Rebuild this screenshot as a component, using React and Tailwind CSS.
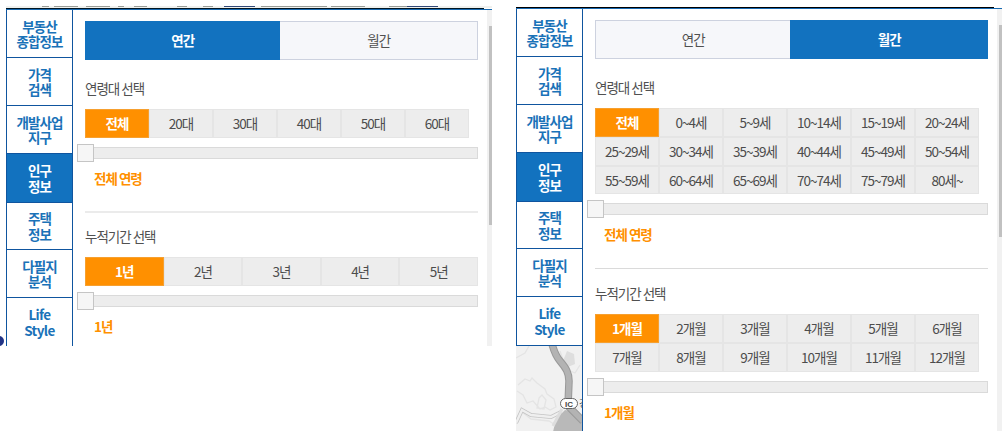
import React, { useState } from 'react';
import clsx from 'clsx';

const menuItems = [
  { lines: ['부동산', '종합정보'], height: 'h-12' },
  { lines: ['가격', '검색'], height: 'h-12' },
  { lines: ['개발사업', '지구'], height: 'h-12' },
  { lines: ['인구', '정보'], height: 'h-[49px]' },
  { lines: ['주택', '정보'], height: 'h-[47px]' },
  { lines: ['다필지', '분석'], height: 'h-12' },
  { lines: ['Life', 'Style'], height: 'h-[49px]' },
];

const periodTabs = ['연간', '월간'];

const yearAges = ['전체', '20대', '30대', '40대', '50대', '60대'];
const monthAges = [
  '전체', '0~4세', '5~9세', '10~14세', '15~19세', '20~24세',
  '25~29세', '30~34세', '35~39세', '40~44세', '45~49세', '50~54세',
  '55~59세', '60~64세', '65~69세', '70~74세', '75~79세', '80세~',
];
const years = ['1년', '2년', '3년', '4년', '5년'];
const months = [
  '1개월', '2개월', '3개월', '4개월', '5개월', '6개월',
  '7개월', '8개월', '9개월', '10개월', '11개월', '12개월',
];

function SideMenu({ children }) {
  const [active, setActive] = useState(3);

  return (
    <nav className="flex w-[67px] shrink-0 flex-col border-r border-[#0f559f]">
      {menuItems.map(({ lines, height }, i) => (
        <button
          key={i}
          onClick={() => setActive(i)}
          className={clsx(
            'flex shrink-0 flex-col items-center justify-center border-b border-l border-[#0f559f] pt-px text-[13.5px] leading-[15.5px] font-bold',
            height,
            i === 6 ? 'tracking-[-0.6px]' : 'tracking-[-0.9px]',
            active === i ? 'bg-[#1272bf] text-white' : 'bg-white text-[#1a72b8]'
          )}
        >
          <span>{lines[0]}</span>
          <span>{lines[1]}</span>
        </button>
      ))}
      {children}
    </nav>
  );
}

function PeriodTabs({ active }) {
  return (
    <div className="grid h-[39px] grid-cols-[195.4px_1fr]">
      {periodTabs.map((tab) => (
        <button
          key={tab}
          className={clsx(
            'border text-[13.5px] tracking-[-0.9px]',
            active === tab
              ? 'border-[#1272bf] bg-[#1272bf] font-bold text-white'
              : 'border-[#cdd2df] bg-[#f6f7fa] text-[#505050]',
            active !== tab && (tab === '연간' ? 'border-r-0' : 'border-l-0')
          )}
        >
          {tab}
        </button>
      ))}
    </div>
  );
}

function OptionGrid({ options, wide }) {
  const [selected, setSelected] = useState(0);

  return (
    <div className={clsx('grid', wide ? 'w-[393px] grid-cols-5' : 'w-[384px] grid-cols-6')}>
      {options.map((option, i) => (
        <button
          key={option}
          onClick={() => setSelected(i)}
          className={clsx(
            'h-[28.8px] border pt-px text-[13.5px] leading-none tracking-[-1px]',
            selected === i
              ? 'border-[#f6a030] bg-[#ff9000] font-bold text-white'
              : 'border-[#e5e5e5] bg-[#ededed] text-[#4c4c4c]'
          )}
        >
          {option}
        </button>
      ))}
    </div>
  );
}

function Slider() {
  return (
    <div className="-ml-2 flex h-[18px] items-center">
      <span className="h-[18px] w-[17px] shrink-0 border border-[#c5c5c5] bg-[#f6f6f6]" />
      <span className="h-3 flex-1 border border-l-0 border-[#dadada] bg-[#ededed]" />
    </div>
  );
}

function FilterGroup({ title, options, value, wide }) {
  return (
    <section>
      <h3 className="h-5 text-[13.5px] leading-5 tracking-[-1px] text-[#505050]">{title}</h3>
      <div className="mt-[11px]">
        <OptionGrid options={options} wide={wide} />
      </div>
      <div className="mt-1.5">
        <Slider />
      </div>
      <p className="mt-1.5 ml-[9px] h-5 text-[13.5px] leading-5 font-bold tracking-[-1px] text-[#ff9000]">{value}</p>
    </section>
  );
}

function ScrollBar({ long }) {
  return (
    <div className="flex w-[5px] shrink-0 flex-col items-end bg-[#f1f1f1] pt-4">
      <span className={clsx('w-[3px] bg-[#c1c1c1]', long ? 'h-[212px]' : 'h-[199px]')} />
    </div>
  );
}

function MapPreview() {
  return (
    <svg viewBox="0 0 66 86" className="h-[86px] w-[66px] shrink-0">
      <rect width="66" height="86" fill="#f1f1f1" />
      <g fill="none" stroke="#e4e4e4" strokeWidth="1.3">
        <path d="M13 0l-4 7-9 5M2 39l7-6 5 2 2-3 5 5 8 6 2 5 7 5 2 8-6 3-5-3-5 2-7-8-6 2-4-8-6-4M23 52l3-3 4 5-2 9-7-1z" />
        <path d="M6 66l9 7 18 2 8 5M44 5l6 18 9 4 5-8" />
      </g>
      <path d="M51 5l7 3 1 10-7 3-5-6z" fill="#dedede" />
      <path d="M0 77l6-13 9 5 20 2 10-5" fill="none" stroke="#c4c4c4" strokeWidth="4" />
      <path d="M0 77l6-13 9 5 20 2 10-5" fill="none" stroke="#efefef" strokeWidth="2.4" />
      <path d="M37 86l3-13 9-9 5 1 5 6 7 3v12z" fill="#b9b9b9" />
      <path d="M46 63l-9 17" fill="none" stroke="#ddd" strokeWidth="3" />
      <path d="M36-2c2 7 3 11 8 17 6 7 9 12 9 20l-1 25 15 15" fill="none" stroke="#999" strokeWidth="7.5" />
      <path d="M36-2c2 7 3 11 8 17 6 7 9 12 9 20l-1 25 15 15" fill="none" stroke="#b3b3b3" strokeWidth="5.5" />
      <rect x="44.5" y="52.5" width="17" height="10" rx="5" fill="#fff" stroke="#666" />
      <text x="53" y="60.5" textAnchor="middle" className="font-['Liberation_Sans'] text-[8px] font-bold" fill="#444">IC</text>
      <text x="63" y="61" className="text-[9px]" fill="#444">경</text>
    </svg>
  );
}

function PhotoStrip() {
  return (
    <svg viewBox="0 0 486 2" preserveAspectRatio="none" className="h-0.5 w-full">
      <rect width="486" height="2" fill="#f0f1ef" />
      <path d="M36 .5h7m5 0h24m8 0h24m8 0h6m10 0h13m30 0h10m16 0h10m24 0h12m12 0h66m4 0h34m24 0h18m6 0h20" stroke="#999d98" fill="none" />
      <path d="M218 .5h31m152 0h31" stroke="#304878" fill="none" />
    </svg>
  );
}

function YearPanel() {
  return (
    <div className="flex h-[340px] w-[486px] flex-col overflow-hidden">
      <PhotoStrip />
      <div className="mr-2 h-px shrink-0 bg-[#001522]" />
      <div className="h-px shrink-0 bg-[#1769b1]" />
      <div className="flex min-h-0 flex-1">
        <SideMenu />
        <div className="min-w-0 flex-1 pt-[11px] pr-[9px] pl-3">
          <div className="w-[393px]">
            <PeriodTabs active="연간" />
            <div className="pt-[18px]">
              <FilterGroup title="연령대 선택" options={yearAges} value="전체 연령" />
            </div>
            <div className="mt-[23px] mb-[13px] h-0.5 bg-[#ebebeb]" />
            <FilterGroup title="누적기간 선택" options={years} value="1년" wide />
          </div>
        </div>
        <ScrollBar />
      </div>
    </div>
  );
}

function MonthPanel() {
  return (
    <div className="mt-px flex h-[424px] w-[486px] flex-col overflow-hidden">
      <div className="mr-2 h-px shrink-0 bg-black" />
      <div className="h-px shrink-0 bg-[#1769b1]" />
      <div className="flex min-h-0 flex-1">
        <SideMenu>
          <MapPreview />
        </SideMenu>
        <div className="min-w-0 flex-1 pt-[11px] pr-[9px] pl-3">
          <div className="w-[393px]">
            <PeriodTabs active="월간" />
            <div className="pt-[18px]">
              <FilterGroup title="연령대 선택" options={monthAges} value="전체 연령" />
            </div>
            <div className="mt-[23.6px] mb-[14px] h-px bg-[#dadada]" />
            <FilterGroup title="누적기간 선택" options={months} value="1개월" />
          </div>
        </div>
        <ScrollBar long />
      </div>
    </div>
  );
}

export default function App() {
  return (
    <div className="flex h-[441px] w-[1008px] items-start overflow-hidden bg-white pt-1.5 font-['Noto_Sans_CJK_KR',sans-serif]">
      <div className="flex h-[340px] w-1.5 shrink-0 flex-col justify-end overflow-hidden">
        <span className="-ml-1.5 size-2.5 rounded-full bg-[#223486]" />
      </div>
      <YearPanel />
      <div className="w-6 shrink-0" />
      <MonthPanel />
    </div>
  );
}
